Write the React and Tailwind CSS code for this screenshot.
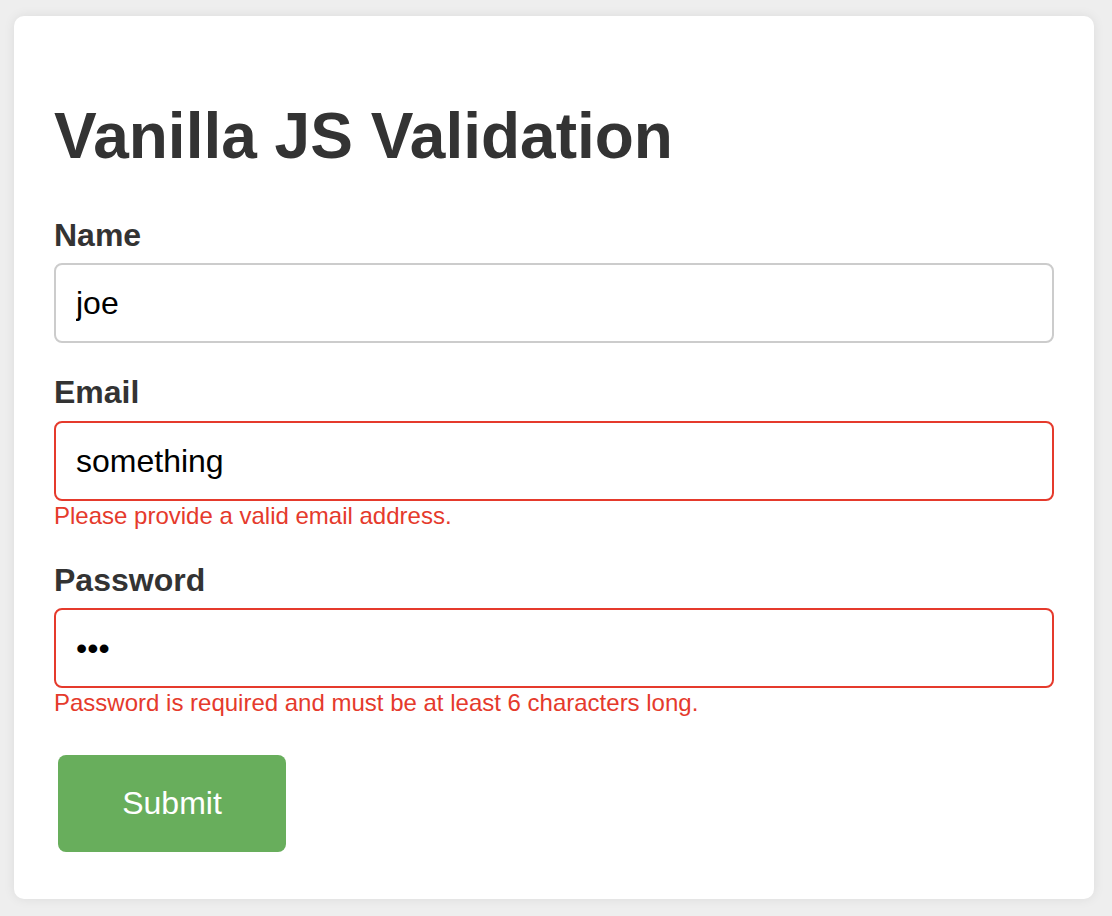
export default function App() {
  return (
    <div
      className="min-h-screen w-full bg-[#eeeeee] pt-[16px] pb-[18px]"
      style={{ fontFamily: '"Liberation Sans", Arial, Helvetica, sans-serif' }}
    >
      {/* CARD */}
      <div className="ml-[14px] w-[1080px] bg-white rounded-[10px] shadow-[0_0_12px_rgba(0,0,0,0.08)] px-[40px] pt-[40px] pb-[47px]">
        <h1 className="mt-[44px] mb-[45px] text-[64px] leading-[72px] font-bold text-[#333333]">
          Vanilla JS Validation
        </h1>

        <form onSubmit={(e) => e.preventDefault()}>
          {/* NAME */}
          <div className="mb-[31px]">
            <label className="block mb-[10px] text-[32px] leading-[36px] font-bold text-[#333333]">
              Name
            </label>
            <input
              type="text"
              defaultValue="joe"
              className="block w-full h-[80px] px-[20px] text-[32px] text-black border-2 border-[#cccccc] rounded-[8px] outline-none"
            />
          </div>

          {/* EMAIL */}
          <div className="mb-[33px]">
            <label className="block mb-[11px] text-[32px] leading-[36px] font-bold text-[#333333]">
              Email
            </label>
            <input
              type="text"
              defaultValue="something"
              className="block w-full h-[80px] px-[20px] text-[32px] text-black border-2 border-[#e53a2c] rounded-[8px] outline-none"
            />
            <p className="mt-[1px] text-[24px] leading-[27px] text-[#e53a2c]">
              Please provide a valid email address.
            </p>
          </div>

          {/* PASSWORD */}
          <div>
            <label className="block mb-[10px] text-[32px] leading-[36px] font-bold text-[#333333]">
              Password
            </label>
            <input
              type="password"
              defaultValue="abc"
              className="block w-full h-[80px] px-[20px] text-[32px] text-black border-2 border-[#e53a2c] rounded-[8px] outline-none"
            />
            <p className="mt-[1px] text-[24px] leading-[27px] text-[#e53a2c]">
              Password is required and must be at least 6 characters long.
            </p>
          </div>

          <button
            type="submit"
            className="block mt-[39px] ml-[4px] w-[228px] h-[97px] rounded-[8px] bg-[#68ae5c] text-white text-[32px] leading-[37px]"
          >
            Submit
          </button>
        </form>
      </div>
    </div>
  );
}
